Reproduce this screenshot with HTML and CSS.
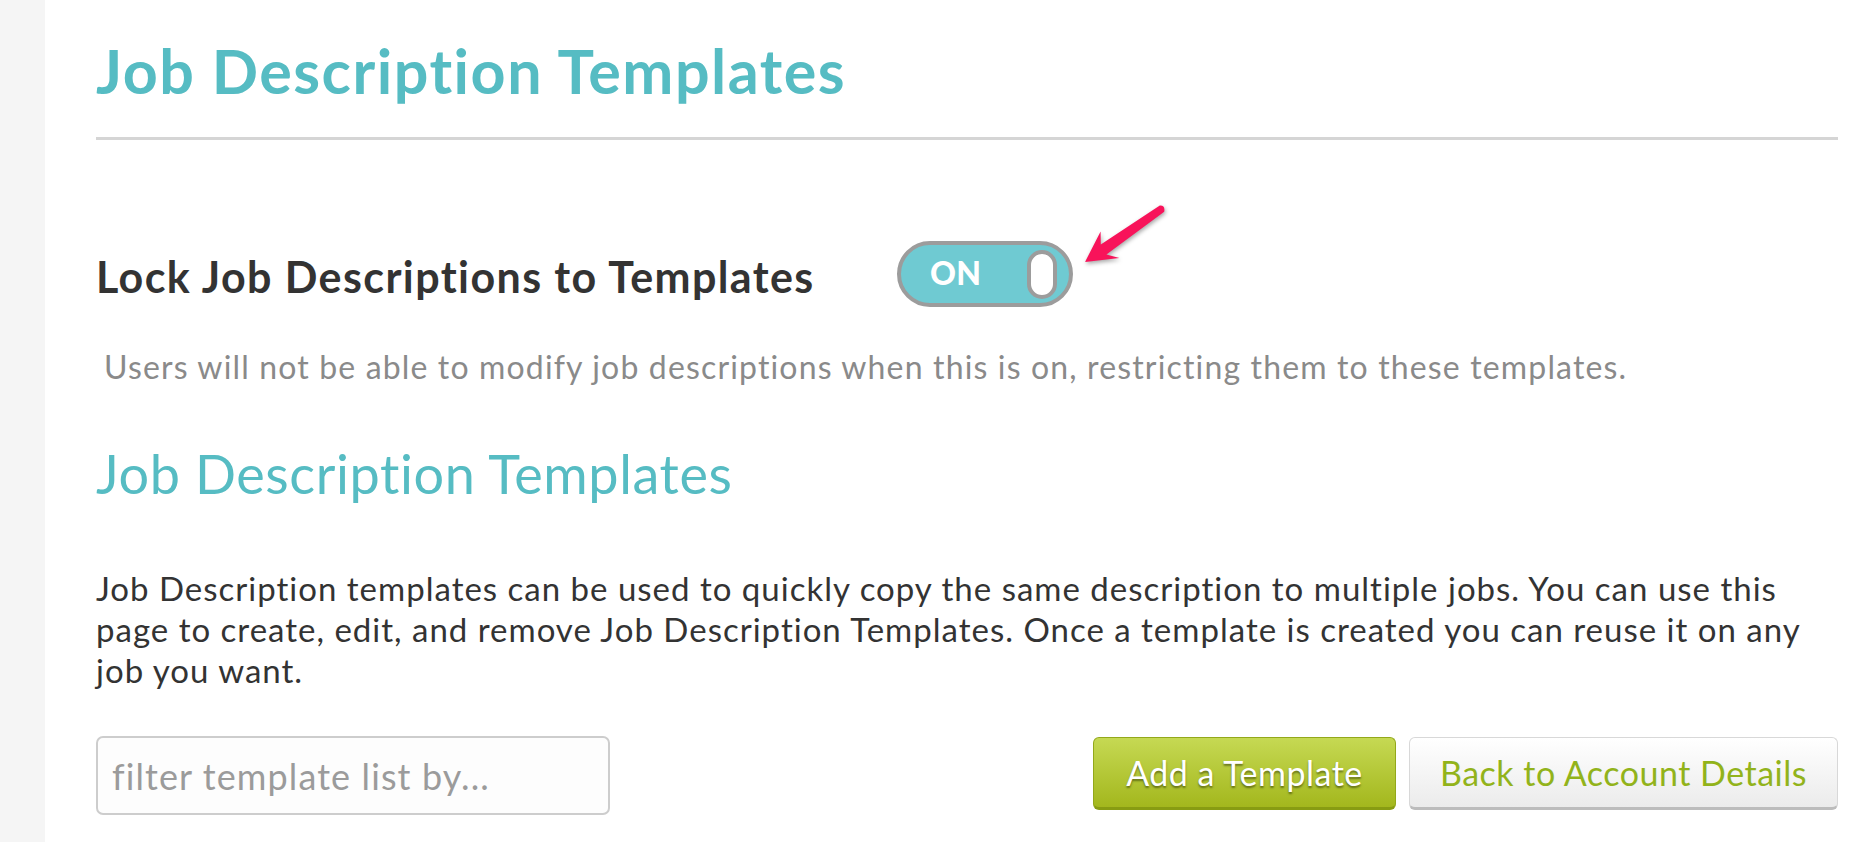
FILE: index.html
```html
<!DOCTYPE html>
<html lang="en">
<head>
<meta charset="utf-8">
<title>Job Description Templates</title>
<link rel="stylesheet" href="styles.css">
</head>
<body>
<div class="page">
  <aside class="rail"></aside>
  <main class="content">
    <h1 class="title">Job Description Templates</h1>
    <hr class="rule">
    <div class="lock-row">
      <h2 class="lock-title">Lock Job Descriptions to Templates</h2>
      <div class="toggle"><span class="toggle-label">ON</span><span class="toggle-knob"></span></div>
      <svg class="annot-arrow" viewBox="0 0 100 75" width="100" height="75" aria-hidden="true">
        <path d="M10 62 L25.6 31.6 L25.8 44.6 L84.8 5.6 Q90.4 5.2 89.2 11.8 L31.4 54.4 L44.4 58 Z" fill="#f8135a"/>
      </svg>
    </div>
    <p class="lock-note">Users will not be able to modify job descriptions when this is on, restricting them to these templates.</p>
    <h2 class="section-title">Job Description Templates</h2>
    <p class="intro">Job Description templates can be used to quickly copy the same description to multiple jobs. You can use this page to create, edit, and remove Job Description Templates. Once a template is created you can reuse it on any job you want.</p>
    <div class="actions">
      <input class="filter" type="text" placeholder="filter template list by...">
      <div class="buttons">
        <button class="btn btn-primary">Add a Template</button>
        <button class="btn btn-secondary">Back to Account Details</button>
      </div>
    </div>
  </main>
</div>
</body>
</html>
```

FILE: styles.css
```css
html, body {
  margin: 0;
  padding: 0;
  background: #ffffff;
}

body {
  font-family: Lato, "Open Sans", "Liberation Sans", sans-serif;
  color: #333333;
}

.page {
  display: flex;
  min-height: 842px;
}

.rail {
  flex: none;
  width: 45px;
  background: #f5f5f5;
}

.content {
  flex: 1;
  padding: 0 30px 0 51px;
}

.title {
  margin: 36px 0 0;
  font-size: 61px;
  letter-spacing: 1.5px;
  line-height: 70px;
  font-weight: 700;
  color: #56bcc3;
}

.rule {
  margin: 31px 0 0;
  height: 0;
  border: 0;
  border-top: 3px solid #d5d5d5;
}

.lock-row {
  position: relative;
  display: flex;
  align-items: flex-start;
  margin-top: 101px;
}

.lock-title {
  flex: none;
  width: 801px;
  margin: 0;
  padding-top: 3px;
  font-size: 43px;
  letter-spacing: 1.4px;
  line-height: 66px;
  font-weight: 700;
  color: #333333;
}

.toggle {
  flex: none;
  box-sizing: border-box;
  width: 176px;
  height: 66px;
  border: 4px solid #9c9c9c;
  border-radius: 33px;
  background: #6fcad2;
  display: flex;
  align-items: center;
  justify-content: space-between;
  padding: 0 12px 0 29px;
}

.toggle-label {
  color: #ffffff;
  font-size: 32px;
  font-weight: 900;
  letter-spacing: 0.3px;
  line-height: 1;
  margin-top: -3px;
}

.toggle-knob {
  box-sizing: border-box;
  width: 30px;
  height: 49px;
  border: 4px solid #9c9c9c;
  border-radius: 15px;
  background: #ffffff;
}

.annot-arrow {
  position: absolute;
  left: 979px;
  top: -41px;
  filter: drop-shadow(1px 2px 2px rgba(0, 0, 0, 0.35));
}

.lock-note {
  margin: 37px 0 0;
  padding-left: 8px;
  font-size: 32px;
  letter-spacing: 1.15px;
  line-height: 40px;
  color: #8a8a8a;
}

.section-title {
  margin: 55px 0 0;
  font-size: 54px;
  letter-spacing: 0.6px;
  line-height: 64px;
  font-weight: 400;
  color: #56bcc3;
}

.intro {
  max-width: 1720px;
  margin: 62px 0 0;
  font-size: 33px;
  letter-spacing: 1px;
  line-height: 41px;
  color: #333333;
}

.actions {
  margin-top: 45px;
  display: flex;
  justify-content: space-between;
  align-items: flex-start;
}

.filter {
  box-sizing: border-box;
  width: 514px;
  height: 79px;
  margin: 0;
  padding: 0 14px;
  border: 2px solid #cdcdcd;
  border-radius: 7px;
  background: #fdfdfd;
  font-family: Lato, "Open Sans", "Liberation Sans", sans-serif;
  font-size: 36px;
  letter-spacing: 1.1px;
  color: #333333;
  outline: none;
}

.filter::placeholder {
  color: #9b9b9b;
}

.buttons {
  display: flex;
  gap: 13px;
  margin-top: 1px;
}

.btn {
  box-sizing: border-box;
  height: 73px;
  margin: 0;
  padding: 0;
  border-radius: 6px;
  font-family: Lato, "Open Sans", "Liberation Sans", sans-serif;
  font-size: 34px;
  letter-spacing: 0.5px;
  cursor: pointer;
}

.btn-primary {
  width: 303px;
  background: linear-gradient(#c6d953, #a3b71d);
  border: 1px solid #93a81a;
  border-bottom: 3px solid #889c12;
  color: #ffffff;
  text-shadow: 0 2px 2px rgba(40, 50, 0, 0.55);
}

.btn-secondary {
  width: 429px;
  background: linear-gradient(#ffffff, #ebebeb);
  border: 1px solid #d8d8d8;
  border-bottom: 3px solid #bcbcbc;
  color: #92b31b;
}
```
